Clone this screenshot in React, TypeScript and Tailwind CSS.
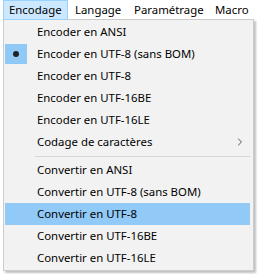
import { ChevronRight } from "lucide-react";

const font = { fontFamily: '"Noto Sans", "Open Sans", sans-serif' };

type Item = { label: string; checked?: boolean; sub?: boolean; active?: boolean };

const encode: Item[] = [
  { label: "Encoder en ANSI" },
  { label: "Encoder en UTF-8 (sans BOM)", checked: true },
  { label: "Encoder en UTF-8" },
  { label: "Encoder en UTF-16BE" },
  { label: "Encoder en UTF-16LE" },
  { label: "Codage de caractères", sub: true },
];

const convert: Item[] = [
  { label: "Convertir en ANSI" },
  { label: "Convertir en UTF-8 (sans BOM)" },
  { label: "Convertir en UTF-8", active: true },
  { label: "Convertir en UTF-16BE" },
  { label: "Convertir en UTF-16LE" },
];

function Row({ item }: { item: Item }) {
  return (
    <div
      className={`flex items-center h-[22px] ${item.active ? "bg-[#91c9f7]" : ""}`}
    >
      <div className="w-[22px] h-[20px] flex items-center justify-center">
        {item.checked && (
          <div className="w-[22px] h-[20px] bg-[#90c8f6] flex items-center justify-center">
            <div className="w-[6px] h-[6px] rounded-full bg-[#222]" />
          </div>
        )}
      </div>
      <span className="ml-[10px] flex-1 text-[11.4px] text-black whitespace-nowrap">{item.label}</span>
      {item.sub && <ChevronRight className="w-[12px] h-[12px] mr-[4px] text-[#222]" strokeWidth={1.5} />}
    </div>
  );
}

export default function App() {
  return (
    <div className="w-[258px] h-[274px] bg-white overflow-hidden" style={font}>
      {/* menu bar */}
      <div className="flex h-[20px] items-stretch text-[11.4px] text-black whitespace-nowrap">
        <div className="ml-[3px] w-[65px] pl-[5px] flex items-center bg-[#cce8ff] border border-[#99d1ff]">Encodage</div>
        <div className="w-[59px] pl-[7px] flex items-center">Langage</div>
        <div className="w-[81px] pl-[7px] flex items-center">Paramétrage</div>
        <div className="pl-[7px] flex items-center">Macro</div>
      </div>
      {/* dropdown */}
      <div className="ml-[3px] w-[251px] -mt-px bg-[#f2f2f2] border border-[#cccccc] py-px pl-px pr-[3px] shadow-[2px_2px_2px_rgba(0,0,0,0.25)]">
        {encode.map((it) => (
          <Row key={it.label} item={it} />
        ))}
        <div className="h-[6px] flex items-center pl-[30px]">
          <div className="h-px w-full bg-[#d7d7d7]" />
        </div>
        {convert.map((it) => (
          <Row key={it.label} item={it} />
        ))}
      </div>
    </div>
  );
}
